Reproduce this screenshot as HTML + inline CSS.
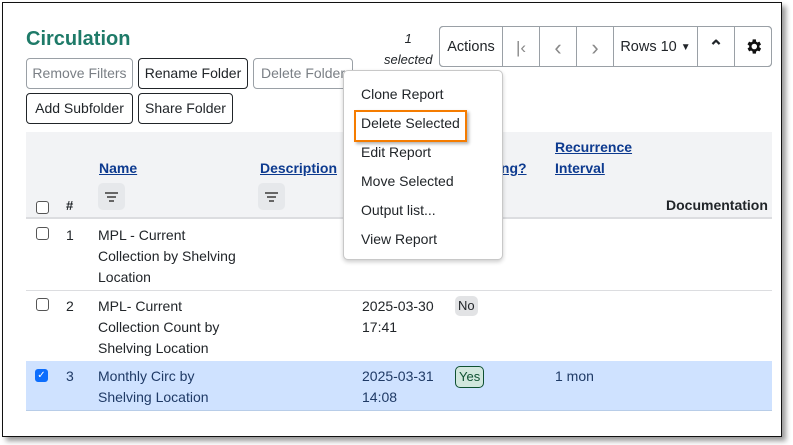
<!DOCTYPE html>
<html><head><style>
*{box-sizing:border-box}
body{margin:0;width:793px;height:445px;background:#fff;font-family:"Liberation Sans",sans-serif;font-size:13.5px;color:#212529;position:relative;overflow:hidden}
.frame{position:absolute;left:2px;top:2px;width:780px;height:435px;border:1.5px solid #111;box-shadow:4px 4px 5px #999;background:#fff}
.a{position:absolute;white-space:nowrap}
.btn{position:absolute;height:31px;border:1px solid #212529;border-radius:4px;line-height:29px;text-align:center;font-size:14px}
.dis{border-color:#9aa0a6;color:#7a7f85}
.tb{position:absolute;top:26px;height:41px;border:1px solid #9aa0a6;line-height:41px;text-align:center;font-size:14.5px}
.lnk{color:#0d3a8f;font-weight:bold;text-decoration:underline}
.cb{position:absolute;width:13px;height:13px;border:1px solid #555;border-radius:3px;background:#fff}
.filt{position:absolute;width:27px;height:27px;background:#e6e8eb;border-radius:5px}
.filt i{position:absolute;left:7px;height:2px;background:#666}
.mi{position:absolute;left:361px;font-size:14px}
.tc{position:absolute;line-height:21px;font-size:14px}
</style></head><body>
<div class="frame"></div>
<div class="a" style="left:26px;top:28px;font-size:20px;font-weight:bold;color:#1e7a68">Circulation</div>
<div class="btn dis" style="left:26px;top:58px;width:107px">Remove Filters</div>
<div class="btn" style="left:138px;top:58px;width:110px">Rename Folder</div>
<div class="btn dis" style="left:253px;top:58px;width:100px">Delete Folder</div>
<div class="btn" style="left:26px;top:93px;width:107px">Add Subfolder</div>
<div class="btn" style="left:138px;top:93px;width:95px">Share Folder</div>
<div class="a" style="left:384px;top:28px;font-style:italic;font-size:13px;line-height:21px;text-align:center">1<br>selected</div>
<div style="position:absolute;left:439px;top:26px;width:333px;height:41px;border:1px solid #9aa0a6;border-radius:4px"></div>
<div class="tb" style="left:439px;width:64px;border-radius:4px 0 0 4px">Actions</div>
<div class="tb" style="left:502px;width:38px;color:#888;font-size:17px">|&lsaquo;</div>
<div class="tb" style="left:539px;width:38px;color:#888;font-size:22px">&lsaquo;</div>
<div class="tb" style="left:576px;width:38px;color:#888;font-size:22px">&rsaquo;</div>
<div class="tb" style="left:613px;width:85px">Rows 10 <span style="font-size:10px;position:relative;top:-1px">&#9660;</span></div>
<div class="tb" style="left:697px;width:38px;font-weight:bold;font-size:18px">&#8963;</div>
<div class="tb" style="left:734px;width:38px;border-radius:0 4px 4px 0"><svg width="19" height="19" viewBox="0 0 24 24" style="margin-top:10px"><path fill="#111" d="M19.4 13a7.5 7.5 0 000-2l2.1-1.6-2-3.5-2.5 1a7 7 0 00-1.7-1L15 3h-4l-.4 2.8a7 7 0 00-1.7 1l-2.5-1-2 3.5L6.6 11a7.5 7.5 0 000 2l-2.1 1.6 2 3.5 2.5-1a7 7 0 001.7 1L11 21h4l.4-2.8a7 7 0 001.7-1l2.5 1 2-3.5zM13 15.5a3.5 3.5 0 110-7 3.5 3.5 0 010 7z"/></svg></div>

<div style="position:absolute;left:26px;top:132px;width:746px;height:87px;background:#f2f3f5;border-bottom:2px solid #dcdde0"></div>
<div class="cb" style="left:36px;top:201px"></div>
<div class="a" style="left:66px;top:198px;font-weight:bold;font-size:13px">#</div>
<div class="a lnk" style="left:99px;top:160px;font-size:14px">Name</div>
<div class="filt" style="left:98px;top:183px"><i style="top:9px;width:13px"></i><i style="top:13px;left:9px;width:9px"></i><i style="top:17px;left:11px;width:5px"></i></div>
<div class="a lnk" style="left:260px;top:160px;font-size:14px">Description</div>
<div class="filt" style="left:258px;top:183px"><i style="top:9px;width:13px"></i><i style="top:13px;left:9px;width:9px"></i><i style="top:17px;left:11px;width:5px"></i></div>
<div class="a lnk" style="left:497px;top:160px;font-size:14px">ing?</div>
<div class="tc lnk" style="left:555px;top:137px">Recurrence<br>Interval</div>
<div class="a" style="left:666px;top:197px;font-weight:bold;font-size:14px">Documentation</div>

<div style="position:absolute;left:26px;top:290px;width:746px;height:1px;background:#dcdde0"></div>
<div style="position:absolute;left:26px;top:361px;width:746px;height:50px;background:#cfe2ff;border-bottom:1px solid #b8cde8"></div>
<div class="cb" style="left:36px;top:227px"></div>
<div class="tc" style="left:66px;top:225px">1</div>
<div class="tc" style="left:98px;top:225px">MPL - Current<br>Collection by Shelving<br>Location</div>
<div class="cb" style="left:36px;top:298px"></div>
<div class="tc" style="left:66px;top:296px">2</div>
<div class="tc" style="left:98px;top:296px">MPL- Current<br>Collection Count by<br>Shelving Location</div>
<div class="tc" style="left:362px;top:296px">2025-03-30<br>17:41</div>
<div class="a" style="left:455px;top:296px;background:#e2e3e5;border-radius:5px;padding:0 3px;line-height:20px;font-size:13px">No</div>
<div class="cb" style="left:35px;top:369px;background:#0d6efd;border-color:#0d6efd;color:#fff;font-size:10px;line-height:11px;text-align:center">&#10003;</div>
<div class="tc" style="left:66px;top:366px;color:#1f3a66">3</div>
<div class="tc" style="left:98px;top:366px;color:#1f3a66">Monthly Circ by<br>Shelving Location</div>
<div class="tc" style="left:362px;top:366px;color:#1f3a66">2025-03-31<br>14:08</div>
<div class="a" style="left:455px;top:366px;background:#d1e7dd;border:1px solid #0f5132;border-radius:5px;padding:0 3px;line-height:20px;font-size:13px;color:#0f5132">Yes</div>
<div class="tc" style="left:555px;top:366px;color:#1f3a66">1 mon</div>

<div style="position:absolute;left:343px;top:70px;width:160px;height:190px;background:#fff;border:1px solid #c8c8c8;border-radius:5px;box-shadow:0 2px 4px rgba(0,0,0,.2)"></div>
<div class="mi" style="top:86px">Clone Report</div>
<div class="mi" style="top:115px">Delete Selected</div>
<div class="mi" style="top:144px">Edit Report</div>
<div class="mi" style="top:173px">Move Selected</div>
<div class="mi" style="top:202px">Output list...</div>
<div class="mi" style="top:231px">View Report</div>
<div style="position:absolute;left:354px;top:110px;width:113px;height:32px;border:2.5px solid #f57c00;box-shadow:2px 2px 3px rgba(0,0,0,.3)"></div>
</body></html>
